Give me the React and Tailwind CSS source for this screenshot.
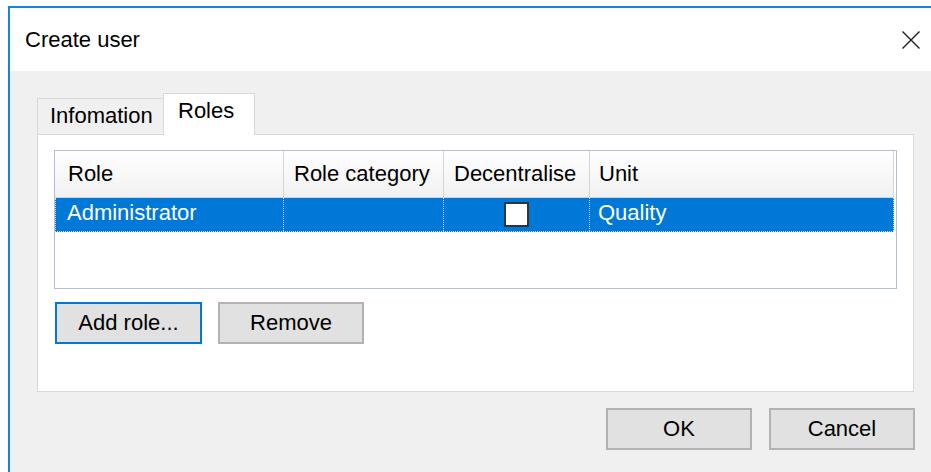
import React from 'react';

const columns = [
  { key: 'role', label: 'Role', width: 'w-[229px]', pad: 'pl-[13px]' },
  { key: 'category', label: 'Role category', width: 'w-[160px]', pad: 'pl-[10px]' },
  { key: 'decentralise', label: 'Decentralise', width: 'w-[146px]', pad: 'pl-[10px]' },
  { key: 'unit', label: 'Unit', width: 'w-[304px]', pad: 'pl-[9px]' },
];

const roles = [{ role: 'Administrator', category: '', decentralise: false, unit: 'Quality' }];

function CloseIcon() {
  return (
    <svg width="20" height="20" viewBox="0 0 20 20" fill="none">
      <path d="M1.5 1.5 L18.5 18.5 M18.5 1.5 L1.5 18.5" stroke="#1f1f1f" strokeWidth="1.4" />
    </svg>
  );
}

function Button({ children, focused, className = '' }) {
  return (
    <button
      className={
        'h-[42px] w-[146px] bg-[#e1e1e1] text-[22px] leading-none text-black ' +
        (focused ? 'border-2 border-[#0078d7] ' : 'border-2 border-[#b2b2b2] ') +
        className
      }
    >
      {children}
    </button>
  );
}

export default function App() {
  return (
    <div className="w-[931px] h-[472px] overflow-hidden bg-white pt-[6px] pl-[8px] font-['Liberation_Sans',Arial,sans-serif] text-black">
      <div className="h-full border-t-2 border-l-2 border-[#1883d7] bg-[#f0f0f0] flex flex-col">
        {/* title bar */}
        <div className="h-[63px] bg-white flex items-center justify-between pl-[15px] pr-[10px]">
          <span className="text-[22px]">Create user</span>
          <CloseIcon />
        </div>

        <div className="flex-1 pt-[22px] pl-[27px] pr-[17px]">
          {/* tabs */}
          <div className="flex items-end h-[41px]">
            <div className="h-[36px] w-[127px] border border-b-0 border-[#d9d9d9] bg-[#f0f0f0] pl-[12px] text-[22px] leading-[34px]">
              Infomation
            </div>
            <div className="relative z-10 -mb-px -ml-px h-[42px] w-[92px] border border-b-0 border-[#d9d9d9] bg-white pl-[14px] text-[22px] leading-[34px]">
              Roles
            </div>
          </div>

          {/* tab page */}
          <div className="h-[258px] border border-[#d9d9d9] bg-white pt-[15px] pl-[16px] pr-[16px]">
            <div className="h-[139px] border border-[#b3bfcc] bg-white">
              <div className="flex h-[47px]">
                {columns.map(c => (
                  <div
                    key={c.key}
                    className={`${c.width} ${c.pad} shrink-0 border-r border-b border-[#d5d5d5] bg-gradient-to-b from-white to-[#f1f1f1] text-[22px] leading-[46px] whitespace-nowrap overflow-hidden`}
                  >
                    {c.label}
                  </div>
                ))}
              </div>
              {roles.map(r => (
                <div key={r.role} className="flex h-[34px] bg-[#0078d7] text-white border-l border-b border-dotted border-[#cfe2f5] w-[839px]">
                  <div className="w-[228px] pl-[11px] shrink-0 border-r border-dotted border-[#cfe2f5] text-[22px] leading-[30px]">
                    {r.role}
                  </div>
                  <div className="w-[160px] shrink-0 border-r border-dotted border-[#cfe2f5] text-[22px] leading-[30px]">
                    {r.category}
                  </div>
                  <div className="w-[146px] shrink-0 border-r border-dotted border-[#cfe2f5] flex items-center justify-center">
                    <span className="block w-[25px] h-[25px] bg-white border-2 border-[#333333]" />
                  </div>
                  <div className="flex-1 pl-[8px] border-r border-dotted border-[#cfe2f5] text-[22px] leading-[30px]">
                    {r.unit}
                  </div>
                </div>
              ))}
            </div>

            <div className="flex gap-[16px] mt-[13px] pl-px">
              <Button focused className="w-[147px]">Add role...</Button>
              <Button>Remove</Button>
            </div>
          </div>

          {/* dialog buttons */}
          <div className="flex justify-end gap-[17px] mt-[16px] -mr-px">
            <Button className="w-[145px]">OK</Button>
            <Button className="w-[145px]">Cancel</Button>
          </div>
        </div>
      </div>
    </div>
  );
}
